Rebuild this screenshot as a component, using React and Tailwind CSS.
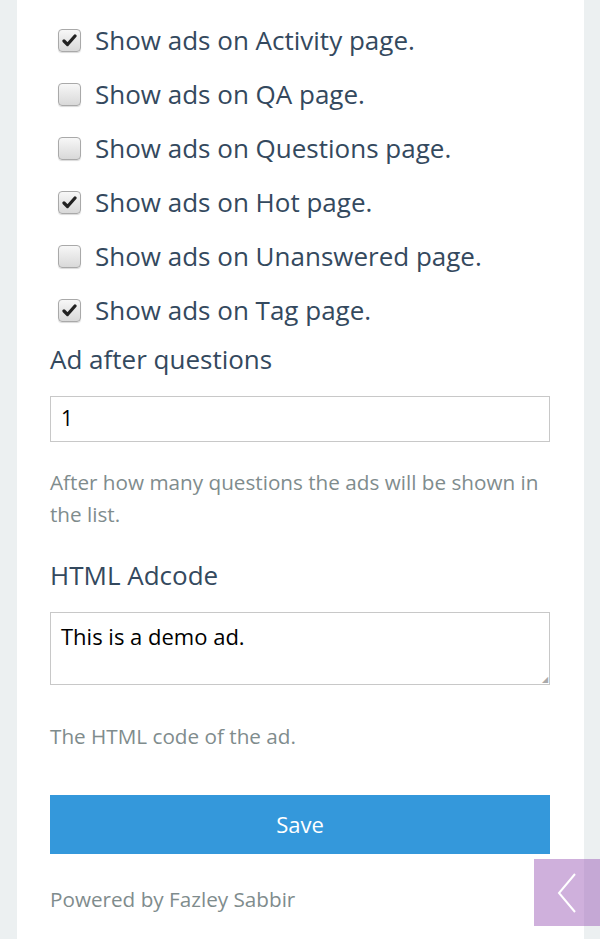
import React from "react";

const pages = [
  { label: "Show ads on Activity page.", checked: true },
  { label: "Show ads on QA page.", checked: false },
  { label: "Show ads on Questions page.", checked: false },
  { label: "Show ads on Hot page.", checked: true },
  { label: "Show ads on Unanswered page.", checked: false },
  { label: "Show ads on Tag page.", checked: true },
];

function Check({ checked }) {
  return (
    <span className="w-[23px] h-[23px] shrink-0 rounded-[4px] border border-[#a9a9a9] bg-gradient-to-b from-[#f7f7f7] to-[#d9d9d9] shadow-[0_1px_1px_rgba(0,0,0,0.15)] flex items-center justify-center">
      {checked && (
        <svg width="15" height="13" viewBox="0 0 15 13">
          <path d="M2 7 L5.5 10.5 L13 2" fill="none" stroke="#222" strokeWidth="3.2" strokeLinecap="round" strokeLinejoin="round" />
        </svg>
      )}
    </span>
  );
}

export default function App() {
  return (
    <div className="min-h-[939px] bg-[#ecf0f1] pl-[17px] pr-[16px] font-['Open_Sans',sans-serif]">
      <div className="bg-white min-h-[939px] pl-[33px] pr-[34px] pt-[13px]">
        {pages.map((p) => (
          <div key={p.label} className="h-[54px] flex items-center gap-[14px] pl-[8px]">
            <Check checked={p.checked} />
            <span className="text-[26px] text-[#34495e]">{p.label}</span>
          </div>
        ))}
        <p className="h-[44px] flex items-center text-[26px] text-[#34495e]">Ad after questions</p>
        <div className="mt-[15px] h-[46px] border border-[#c8c8c8] flex items-center px-[10px] text-[21px] text-black">1</div>
        <p className="mt-[24px] text-[20.7px] leading-[32px] text-[#7f8c8d]">
          After how many questions the ads will be shown in the list.
        </p>
        <p className="mt-[23px] h-[44px] flex items-center text-[26px] text-[#34495e]">HTML Adcode</p>
        <div className="relative mt-[15px] h-[73px] border border-[#c8c8c8] px-[10px] pt-[7px] text-[22px] text-black">
          This is a demo ad.
          <span className="absolute right-[1px] bottom-[1px] text-[8px] leading-none text-[#aaa]">◢</span>
        </div>
        <p className="mt-[35px] text-[20.7px] leading-[32px] text-[#7f8c8d]">The HTML code of the ad.</p>
        <button className="mt-[43px] w-full h-[59px] bg-[#3498db] text-white text-[22px]">Save</button>
        <p className="mt-[29px] text-[20.7px] leading-[32px] text-[#7f8c8d]">Powered by Fazley Sabbir</p>
      </div>
      <div className="fixed left-[534px] top-[859px] w-[66px] h-[67px] bg-[rgba(155,89,182,0.48)] flex items-center justify-center">
        <svg width="24" height="42" viewBox="0 0 24 42">
          <path d="M20 2 L4 21 L20 40" fill="none" stroke="white" strokeWidth="2" />
        </svg>
      </div>
    </div>
  );
}
